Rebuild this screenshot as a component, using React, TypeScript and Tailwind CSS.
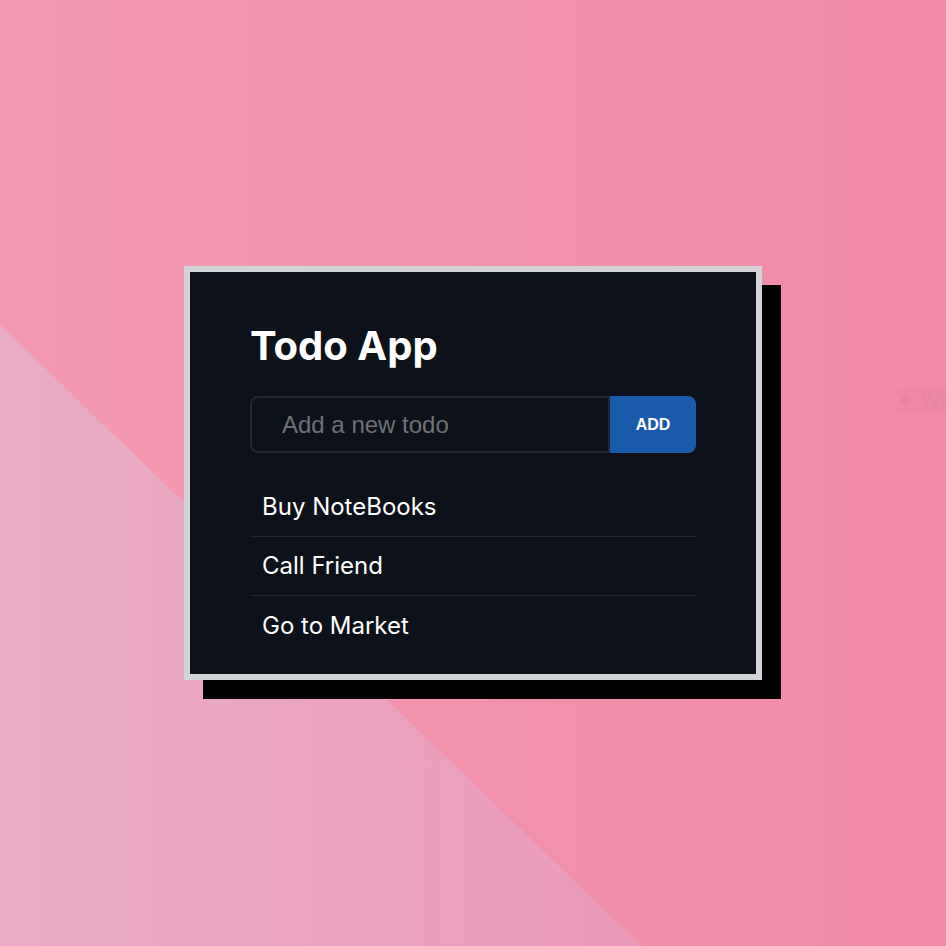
import { useState } from "react";

const initialTodos = ["Buy NoteBooks", "Call Friend", "Go to Market"];

export default function App() {
  const [todos, setTodos] = useState<string[]>(initialTodos);
  const [text, setText] = useState("");

  function add() {
    const v = text.trim();
    if (!v) return;
    setTodos([...todos, v]);
    setText("");
  }

  return (
    <div className="relative flex min-h-screen items-center justify-center overflow-hidden bg-[linear-gradient(to_right,#f49ab2,#f18aa8)]">
      {/* lower-left diagonal panel */}
      <div className="absolute inset-0 bg-[linear-gradient(to_right,#e7acc4,#ee92b4)] [clip-path:polygon(0_34.3%,67.8%_100%,0_100%)]" />

      {/* faint badge peeking at the right edge */}
      <div className="absolute left-[895px] top-[388px] flex h-[24px] items-center gap-[10px] rounded bg-[#e07f9e]/10 pl-[6px] pr-4 font-['Liberation_Sans',sans-serif] text-[20px] text-[#dc7c9d]/40">
        <span className="h-[10px] w-[10px] rounded-full bg-[#e57a9a]/40" />
        <span>Wix</span>
      </div>

      <div className="relative w-[578px] border-[6px] border-[#d1d3d6] bg-[#0d111a] px-[60px] pb-[19px] pt-[50px] font-['Inter',sans-serif] text-white shadow-[19px_19px_0_#000]">
        <h1 className="text-[40px] font-bold leading-[48px]">Todo App</h1>

        <div className="mt-[26px] flex h-[57px]">
          <input
            value={text}
            onChange={(e) => setText(e.target.value)}
            onKeyDown={(e) => e.key === "Enter" && add()}
            placeholder="Add a new todo"
            className="min-w-0 flex-1 rounded-l-[8px] border-2 border-[#23272f] bg-transparent pl-[30px] font-['Liberation_Sans',sans-serif] text-[24px] text-white outline-none placeholder:text-[#6f7176]"
          />
          <button
            type="button"
            onClick={add}
            className="w-[86px] rounded-r-[8px] bg-[#1a5aab] font-['Liberation_Sans',sans-serif] text-[16px] font-bold text-white"
          >
            ADD
          </button>
        </div>

        <ul className="mt-[25px] divide-y divide-[#23272f]">
          {todos.map((t, i) => (
            <li key={i} className="flex h-[59px] items-center px-[12px] text-[24px] text-white">
              {t}
            </li>
          ))}
        </ul>
      </div>
    </div>
  );
}
